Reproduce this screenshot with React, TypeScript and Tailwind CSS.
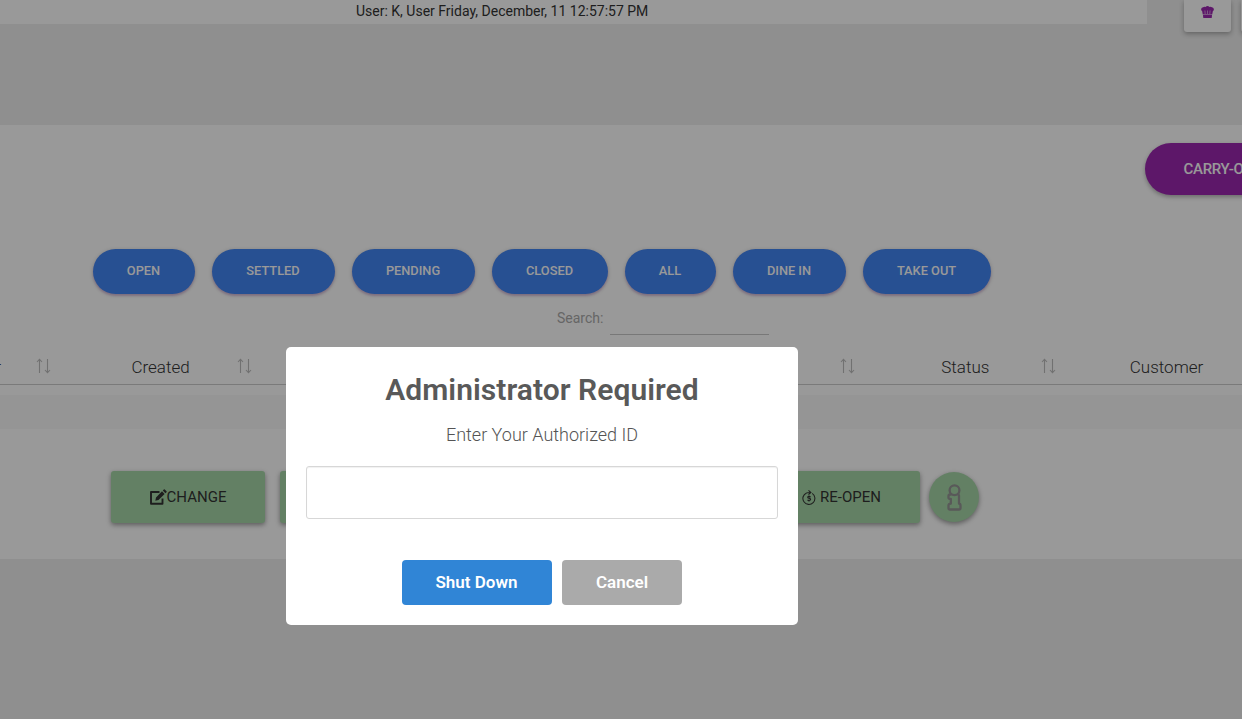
import React from "react";

const filters = [
  { label: "OPEN", width: "w-[102px]" },
  { label: "SETTLED", width: "w-[123px]" },
  { label: "PENDING", width: "w-[123px]" },
  { label: "CLOSED", width: "w-[116px]" },
  { label: "ALL", width: "w-[91px]" },
  { label: "DINE IN", width: "w-[113px]" },
  { label: "TAKE OUT", width: "w-[128px]" },
];

function SortArrows() {
  return (
    <svg className="h-4 w-4" viewBox="0 0 16 16" fill="none" stroke="#bdbdbd">
      <path d="M4.500 15V1M2 4L4.500 1.300L7 4M12.500 1v14M10 12l2.500 2.700L15 12" strokeWidth="1.100" />
    </svg>
  );
}

function ChefHat() {
  return (
    <svg className="h-3 w-[13px]" viewBox="0 0 13 12" fill="#9c27b0">
      <path d="M2 1.300Q3.200.5 4.500.9Q6.500-.8 8.500.9Q9.800.5 11 1.300Q12.900 1.600 12.900 3.400Q12.900 4.700 11.900 5L11.200 8.500H1.800L1.100 5Q.1 4.700 .1 3.400Q.1 1.600 2 1.300Z" />
      <path d="M2 9h9l-.2 2.500q0 .5-.7.5H3q-.7 0-.8-.5Z" />
      <path d="M3.900 4.500l.3 3.500M6.500 4.500v3.500M9.100 4.500l-.3 3.500" stroke="#fff" strokeWidth=".5" />
    </svg>
  );
}

function EditIcon() {
  return (
    <svg className="h-4 w-[17px]" viewBox="0 0 17 16">
      <path d="M9.500 3H1v11.800h11.500V9.500" fill="none" stroke="#333" strokeWidth="1.900" strokeLinejoin="round" />
      <path d="M5.300 11.700L6 8.400L12 2.300L14.600 4.900L8.500 11ZM12.800 1.500L13.800.5Q14.300 0 14.800.5L16.500 2.200Q17 2.700 16.500 3.200L15.400 4.200Z" fill="#333" />
    </svg>
  );
}

function ReopenIcon() {
  return (
    <svg className="h-[15px] w-[14px]" viewBox="0 0 14 15" fill="none" stroke="#333">
      <path d="M10.200 3.400A6 6 0 1 1 4.500 2.900Q5.500 2.400 8.500 2.500M6.500.4L8.900 2.500L6.500 4.700" strokeWidth="1.050" />
      <path d="M8.600 6.900Q7 6 6 6.700Q5.300 7.700 6.900 8.200Q9 8.700 8.400 9.900Q7.500 10.800 5.500 10.100M7 5.500v1M7 10.500v1" strokeWidth="1.200" />
    </svg>
  );
}

function InfoOutline() {
  return (
    <svg className="h-[27px] w-[15px]" viewBox="0 0 15 27" fill="none" stroke="#949494" strokeWidth="2.300" strokeLinejoin="round">
      <circle cx="7.500" cy="6.200" r="4.900" />
      <path d="M4.500 10.500H3Q1.500 10.500 1.500 12V13.700Q1.500 15 3.800 15V19.700Q1.500 19.700 1.500 21.500V24Q1.500 25.500 3 25.500H12Q13.500 25.500 13.500 24V21.500Q13.500 19.700 12 19.700V11.500Q12 10.500 10.500 10.500" />
    </svg>
  );
}

function HeaderCell({ label }: { label?: string }) {
  return (
    <div className="relative flex h-full w-[201.2px] shrink-0 justify-center pt-[5px] text-[17px] leading-[25px] font-light text-[#333]">
      <span>{label}</span>
      <span className="absolute right-[9.5px] top-[8px]"><SortArrows /></span>
    </div>
  );
}

export default function App() {
  return (
    <div className="relative h-[719px] w-[1242px] overflow-hidden bg-[#eee] font-['Roboto',sans-serif] text-[#333]">
      <header className="flex h-[125px] items-start">
        <div className="h-6 w-[1147px] shrink-0 bg-white pl-[356px] text-[14px] leading-[22px] whitespace-nowrap text-[#333]">
          User: K, User Friday, December, 11 12:57:57 PM
        </div>
        <div className="ml-[37px] flex h-8 w-[47px] shrink-0 justify-center rounded-b-[3px] bg-white pt-1.5 shadow-[0_2px_5px_rgba(0,0,0,0.3)]">
          <ChefHat />
        </div>
        <div className="ml-[10px] h-8 w-[47px] shrink-0 rounded-b-[3px] bg-white shadow-[0_2px_5px_rgba(0,0,0,0.3)]" />
      </header>

      <main className="h-[434px] overflow-hidden bg-white">
        <div className="flex h-[124px] pt-[18px] pl-[1145px]">
          <button className="h-[52px] w-[180px] shrink-0 rounded-full bg-[#9c27b0] pl-[38.5px] text-left text-[15px] font-medium tracking-[-0.3px] whitespace-nowrap text-white shadow-[0_2px_4px_rgba(0,0,0,0.3)]">
            CARRY-OUT
          </button>
        </div>
        <nav className="flex gap-[17px] pl-[93px]">
          {filters.map((f) => (
            <button key={f.label} className={`h-[45px] ${f.width} rounded-full bg-[#4285f4] pr-px pb-[2px] text-[12.8px] font-medium text-white shadow-[0_2px_2px_rgba(156,39,176,0.2),0_1px_4px_rgba(0,0,0,0.2)]`}>
              {f.label}
            </button>
          ))}
        </nav>
        <label className="flex h-[56px] pl-[557px] text-[14px] text-[#aaa]">
          <span className="w-[53px] pt-[14px] leading-5">Search:</span>
          <input className="h-[41px] w-[159px] border-b border-[#c9c9c9] bg-transparent outline-none" />
        </label>
        <div className="flex h-[35px] border-b border-[#ccc]">
          <div className="relative h-full w-[60px] shrink-0 overflow-hidden text-[17px] font-light">
            <span className="absolute top-[5px] right-[59px] leading-[25px]">Number</span>
            <span className="absolute top-[8px] right-[9.5px]"><SortArrows /></span>
          </div>
          <HeaderCell label="Created" />
          <HeaderCell />
          <HeaderCell />
          <HeaderCell />
          <HeaderCell label="Status" />
          <HeaderCell label="Customer" />
        </div>
        <div className="mt-[10px] h-[34px] bg-[#f9f9f9]" />
        <div className="flex pt-[42px] pl-[111px]">
          <button className="flex h-[52px] w-[154px] items-center justify-center rounded-[3px] bg-[#a5d6a7] text-[15px] text-[#333] shadow-[0_2px_5px_rgba(0,0,0,0.4)]">
            <EditIcon />CHANGE
          </button>
          <div className="ml-[15px] h-[52px] w-[160px] rounded-[3px] bg-[#a5d6a7] shadow-[0_2px_5px_rgba(0,0,0,0.4)]" />
          <button className="ml-[324px] flex h-[52px] w-[156px] items-center justify-center gap-1 rounded-[3px] bg-[#a5d6a7] pr-px text-[15px] text-[#333] shadow-[0_2px_5px_rgba(0,0,0,0.4)]">
            <ReopenIcon />RE-OPEN
          </button>
          <button className="mt-px ml-[9px] flex size-[50px] items-center justify-center rounded-full bg-[#a5d6a7] shadow-[0_2px_5px_rgba(0,0,0,0.4)]">
            <InfoOutline />
          </button>
        </div>
      </main>

      <div className="absolute inset-0 flex justify-center bg-black/40 pt-[347px] pr-[158px]">
        <section role="dialog" className="flex h-[278px] w-[512px] flex-col items-center rounded-[5px] bg-white px-5 pt-[23px]">
          <h2 className="text-[30px] leading-10 font-semibold tracking-[0.05px] text-[#595959]">Administrator Required</h2>
          <p className="mt-[13px] text-[18px] leading-6 font-light text-[#545454]">Enter Your Authorized ID</p>
          <input className="mt-[19px] h-[53px] w-full shrink-0 rounded-[3px] border border-[#d7d7d7] bg-white px-3 text-lg shadow-[inset_0_1px_1px_rgba(0,0,0,0.06)] outline-none" />
          <div className="mt-[41px] flex gap-[10px] text-[17px] font-semibold text-white">
            <button className="h-[45px] w-[150px] rounded-[4px] bg-[#3085d6] pr-px">Shut Down</button>
            <button className="h-[45px] w-[120px] rounded-[4px] bg-[#aaa]">Cancel</button>
          </div>
        </section>
      </div>
    </div>
  );
}
